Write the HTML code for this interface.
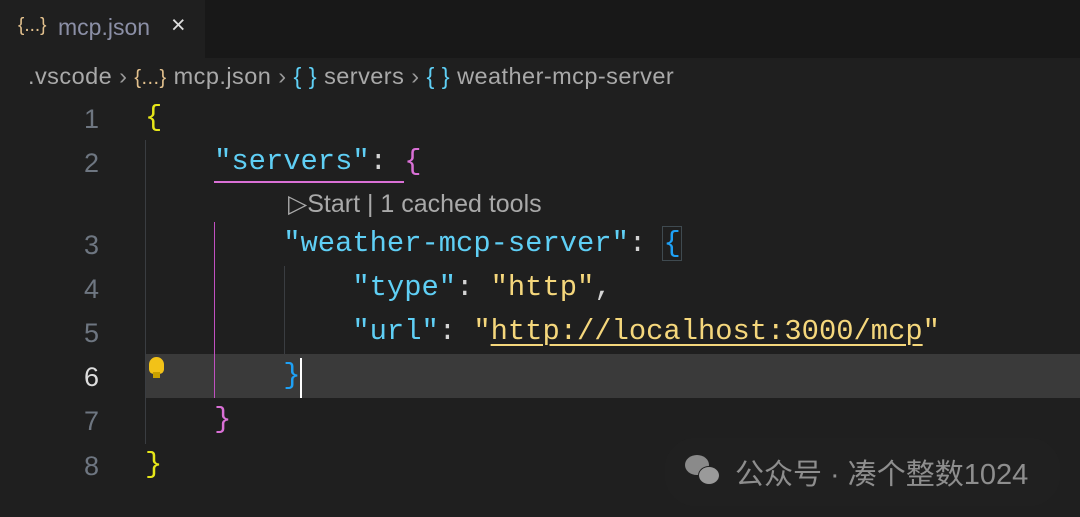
<!DOCTYPE html>
<html><head><meta charset="utf-8"><style>
body{margin:0;width:1080px;height:517px;background:#1f1f1f;overflow:hidden;position:relative;font-family:"Liberation Sans",sans-serif}
.tabbar{position:absolute;left:0;top:0;width:1080px;height:58px;background:#181818}
.tab{position:absolute;left:0;top:0;width:205px;height:58px;background:#1f1f1f}
.ab{position:absolute;white-space:pre}
.code{font-family:"Liberation Mono","DejaVu Sans Mono",monospace;font-size:28.8px;line-height:44px;height:44px;color:#d4d4d4}
.ln{position:absolute;width:99px;left:0;text-align:right;color:#6e7681;font-family:"Liberation Sans",sans-serif;font-size:27px;line-height:44px}
.k{color:#5fcff5}.s{color:#f5d77c}.y{color:#e6e619}.p{color:#da70d6}.b{color:#1ea0f5}
.g{position:absolute;width:1px;background:#3a3d41}
</style></head><body>
<div class="tabbar"></div><div class="tab"></div>
<div class="ab" style="left:18px;top:15px;font-size:19px;color:#e2c08d">{...}</div>
<div class="ab" style="left:58px;top:14px;font-size:23px;color:#8b8fa6">mcp.json</div>
<div class="ab" style="left:171px;top:11px;font-size:25px;color:#ddd">×</div>
<div class="ab" style="left:28px;top:63px;font-size:23.5px;letter-spacing:0.45px;color:#a9a9a9">.vscode <span style="color:#999">›</span> <span style="color:#e2c08d;font-size:20px">{...}</span> mcp.json <span style="color:#999">›</span> <span style="color:#5fcff5">{ }</span> servers <span style="color:#999">›</span> <span style="color:#5fcff5">{ }</span> weather-mcp-server</div>
<div class="ab" style="left:145px;top:354px;width:935px;height:44px;background:#3a3a3a"></div>
<div class="g" style="left:145px;top:140px;height:304px"></div>
<div class="g" style="left:214px;top:222px;height:176px;background:#c050c0"></div>
<div class="g" style="left:284px;top:266px;height:88px"></div>
<div class="ln" style="top:97px">1</div>
<div class="ln" style="top:141px">2</div>
<div class="ln" style="top:223px">3</div>
<div class="ln" style="top:267px">4</div>
<div class="ln" style="top:311px">5</div>
<div class="ln" style="top:355px;color:#ddd">6</div>
<div class="ln" style="top:399px">7</div>
<div class="ln" style="top:444px">8</div>
<div class="ab code" style="left:145px;top:96px"><span class="y">{</span></div>
<div class="ab code" style="left:145px;top:140px">    <span class="k">"servers"</span>: <span class="p">{</span></div>
<div class="ab" style="left:214px;top:181px;width:190px;height:2px;background:#da70d6"></div>
<div class="ab" style="left:288px;top:189px;font-size:25px;color:#a9a9a9">▷Start | 1 cached tools</div>
<div class="ab code" style="left:145px;top:222px">        <span class="k">"weather-mcp-server"</span>: <span class="b" style="outline:1px solid #3f4a50">{</span></div>
<div class="ab code" style="left:145px;top:266px">            <span class="k">"type"</span>: <span class="s">"http"</span>,</div>
<div class="ab code" style="left:145px;top:310px">            <span class="k">"url"</span>: <span class="s">"<span style="text-decoration:underline;text-underline-offset:5px;text-decoration-thickness:2px">http://localhost:3000/mcp</span>"</span></div>
<div class="ab code" style="left:145px;top:354px">        <span class="b">}</span></div>
<div class="ab" style="left:300px;top:358px;width:2px;height:40px;background:#fff"></div>
<div class="ab" style="left:149px;top:357px;width:15px;height:17px;border-radius:8px 8px 5px 5px;background:#f2c218"></div>
<div class="ab" style="left:153px;top:372px;width:7px;height:6px;background:#c9a000"></div>
<div class="ab code" style="left:145px;top:398px">    <span class="p">}</span></div>
<div class="ab code" style="left:145px;top:443px"><span class="y">}</span></div>
<div class="ab" style="left:665px;top:438px;width:395px;height:68px;border-radius:30px;background:#202020"></div>
<div class="ab" style="left:685px;top:455px;width:24px;height:20px;border-radius:50%;background:#8a8a8a"></div>
<div class="ab" style="left:698px;top:466px;width:20px;height:17px;border-radius:50%;background:#9a9a9a;border:1px solid #222"></div>
<div class="ab" style="left:735px;top:451px;font-family:'Liberation Sans','Noto Sans CJK SC',sans-serif;font-size:29px;color:#8e8e8e">公众号 · 凑个整数1024</div>
</body></html>
